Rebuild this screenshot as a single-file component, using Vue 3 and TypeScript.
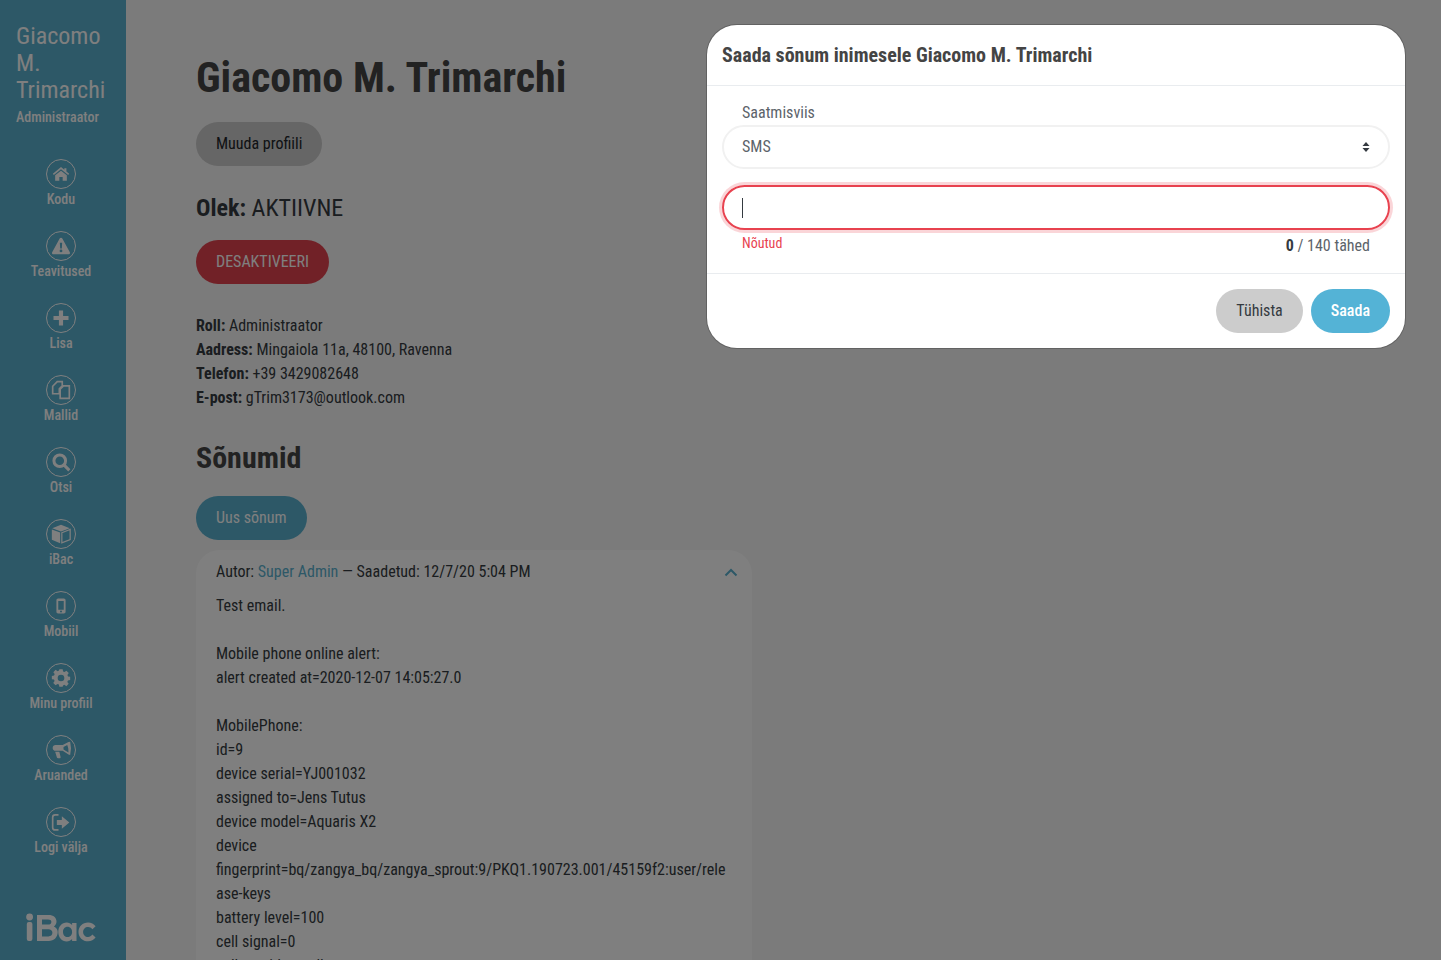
<template>
  <div class="page">
    <aside class="sidebar">
      <div class="user">
        <div class="user-name">Giacomo M. Trimarchi</div>
        <div class="user-role">Administraator</div>
      </div>
      <nav class="nav">
        <a v-for="item in navItems" :key="item.label" class="nav-item">
          <span class="nav-circle">
            <svg viewBox="0 0 24 24" class="nav-icon" v-html="item.icon"></svg>
          </span>
          <span class="nav-label">{{ item.label }}</span>
        </a>
      </nav>
      <div class="logo">
        <svg viewBox="0 0 70 30" width="70" height="30">
          <circle cx="3.600" cy="4" r="3.400" fill="#fff" />
          <rect x="0.800" y="9" width="5.600" height="19" rx="2" fill="#fff" />
          <path d="M11 2h11.500c5 0 8 2.600 8 6.600 0 2.200-1 3.800-2.600 4.800 2.400 1 3.800 3 3.800 5.600 0 5-3.600 9-9 9H11zM16 6.600v5h6c2 0 3.400-1 3.400-2.600s-1.400-2.400-3.400-2.400zM16 16.200v7.200h6.400c2.400 0 4-1.400 4-3.600s-1.600-3.600-4-3.600z" fill="#fff" fill-rule="evenodd" />
          <path d="M50.500 10v18h-4.400v-2c-1.400 1.500-3.200 2.400-5.400 2.400-4.800 0-8.400-4-8.400-9.500s3.600-9.400 8.400-9.400c2.200 0 4 .9 5.400 2.400v-2zM41.500 13.800c-2.600 0-4.500 2.200-4.500 5.100s1.900 5.100 4.500 5.100 4.600-2.200 4.600-5.100-2-5.100-4.600-5.100z" fill="#fff" fill-rule="evenodd" />
          <path d="M69.600 13.200l-3.200 3c-1.200-1.500-2.600-2.300-4.300-2.300-2.900 0-5 2.100-5 5s2.100 5 5 5c1.700 0 3.100-.8 4.300-2.300l3.200 3c-1.800 2.300-4.400 3.700-7.500 3.700-5.500 0-9.600-4.100-9.600-9.400s4.100-9.400 9.600-9.400c3.100 0 5.700 1.400 7.500 3.700z" fill="#fff" />
        </svg>
      </div>
    </aside>

    <main class="content">
      <h1 class="title">Giacomo M. Trimarchi</h1>
      <button class="btn btn-light">Muuda profiili</button>
      <p class="status"><b>Olek:</b> AKTIIVNE</p>
      <button class="btn btn-danger">DESAKTIVEERI</button>
      <div class="details">
        <div><b>Roll:</b> Administraator</div>
        <div><b>Aadress:</b> Mingaiola 11a, 48100, Ravenna</div>
        <div><b>Telefon:</b> +39 3429082648</div>
        <div><b>E-post:</b> gTrim3173@outlook.com</div>
      </div>
      <h2 class="subtitle">Sõnumid</h2>
      <button class="btn btn-primary">Uus sõnum</button>
      <section class="message">
        <div class="message-head">
          <span>Autor: <a class="link">Super Admin</a> — Saadetud: 12/7/20 5:04 PM</span>
          <svg class="chevron" viewBox="0 0 14 9" width="14" height="9">
            <path d="M1.500 7.500L7 2l5.500 5.500" fill="none" stroke="#5ab0ce" stroke-width="2" />
          </svg>
        </div>
        <div class="message-body">{{ messageBody }}</div>
      </section>
    </main>

    <div class="backdrop"></div>

    <div class="modal">
      <header class="modal-head">Saada sõnum inimesele Giacomo M. Trimarchi</header>
      <div class="modal-body">
        <label class="field-label">Saatmisviis</label>
        <div class="select">
          <span>SMS</span>
          <svg viewBox="0 0 8 12" width="8" height="12">
            <path d="M4 1l3.500 4h-7zM4 11L.5 7h7z" fill="#343a40" />
          </svg>
        </div>
        <div class="input-invalid"><span class="caret"></span></div>
        <div class="field-foot">
          <span class="error">Nõutud</span>
          <span class="counter"><b>0</b> / 140 tähed</span>
        </div>
      </div>
      <footer class="modal-foot">
        <button class="btn btn-cancel">Tühista</button>
        <button class="btn btn-send">Saada</button>
      </footer>
    </div>
  </div>
</template>

<script setup lang="ts">
interface NavItem {
  label: string
  icon: string
}

const navItems: NavItem[] = [
  { label: 'Kodu', icon: '<path fill="currentColor" d="M12 3.500l4 3.300V5h2.500v3.900l3.300 2.800-1.200 1.400L12 6.300 3.400 13.100l-1.200-1.400zM12 8l7 5.600V20h-5v-4.500h-4V20H5v-6.400z"/>' },
  { label: 'Teavitused', icon: '<path fill="currentColor" fill-rule="evenodd" d="M12 2c.7 0 1.200.4 1.600 1l9 16.500c.6 1.100-.2 2.500-1.600 2.500H3c-1.400 0-2.200-1.400-1.600-2.500l9-16.500c.4-.6.900-1 1.600-1zM10.600 8l.4 7h2l.4-7zM12 16.200a1.700 1.700 0 1 0 0 3.400 1.700 1.700 0 0 0 0-3.400z"/>' },
  { label: 'Lisa', icon: '<path fill="currentColor" d="M9.500 3h5v6.500H21v5h-6.500V21h-5v-6.500H3v-5h6.500z"/>' },
  { label: 'Mallid', icon: '<path fill="none" stroke="currentColor" stroke-width="2" d="M7.500 2h6v5L10 10.500V16.500H2V7.500zM15 7h7v15H11V11z"/>' },
  { label: 'Otsi', icon: '<path fill="none" stroke="currentColor" stroke-width="3.600" d="M10.500 3.500a7 7 0 1 1 0 14 7 7 0 0 1 0-14zM15.500 15.500l6.500 6.500"/>' },
  { label: 'iBac', icon: '<path fill="currentColor" d="M12 1l10.500 4L12 9 1.500 5zM1 6.500l10 3.800V23L1 19z"/><path fill="none" stroke="currentColor" stroke-width="1.500" d="M13 10.500l10-4v12.300L13 22.500z"/>' },
  { label: 'Mobiil', icon: '<path fill="currentColor" fill-rule="evenodd" d="M8.500 3h7c1.100 0 2 .9 2 2v14c0 1.100-.9 2-2 2h-7c-1.100 0-2-.9-2-2V5c0-1.100.9-2 2-2zM8.700 6v10.500h6.600V6zM12 17.500a1.200 1.200 0 1 0 0 2.400 1.200 1.200 0 0 0 0-2.400z"/>' },
  { label: 'Minu profiil', icon: '<path fill="currentColor" fill-rule="evenodd" d="M10 2h4l.5 2.700 1.700.7 2.300-1.600 2.800 2.800-1.600 2.300.7 1.700L23 11v4l-2.700.5-.7 1.700 1.600 2.300-2.800 2.800-2.300-1.600-1.700.7L14 23h-4l-.5-2.700-1.700-.7-2.300 1.600-2.800-2.800 1.600-2.300-.7-1.700L1 14v-4l2.700-.5.7-1.700-1.600-2.300 2.800-2.800 2.300 1.600 1.700-.7zM12 8.500a4 4 0 1 0 0 8 4 4 0 0 0 0-8z" transform="translate(0 -.5)"/>' },
  { label: 'Aruanded', icon: '<path fill="currentColor" fill-rule="evenodd" d="M21 2.500L23 2l1 8-1 8-2-.5-7-4.500H5.500C3.500 13 2 11.500 2 9.500S3.500 6 5.500 6H14zM19.500 6L15 8.500v3l6 3.500-.3-5zM5 14h5l1.500 6.500c.2.900-.4 1.500-1.200 1.500H8.500c-.7 0-1.200-.4-1.400-1z"/>' },
  { label: 'Logi välja', icon: '<path fill="currentColor" d="M13 5l9 7.500-9 7.500v-4.500H7v-6h6z"/><path fill="none" stroke="currentColor" stroke-width="2" d="M9 3.500H5C3.300 3.500 2 4.800 2 6.500v12c0 1.700 1.300 3 3 3h4"/>' },
]

const messageBody = `Test email.

Mobile phone online alert:
alert created at=2020-12-07 14:05:27.0

MobilePhone:
id=9
device serial=YJ001032
assigned to=Jens Tutus
device model=Aquaris X2
device fingerprint=bq/zangya_bq/zangya_sprout:9/PKQ1.190723.001/45159f2:user/release-keys
battery level=100
cell signal=0
cell provider=null
wifi signal=100`
</script>

<style>
html,
body {
  margin: 0;
  overflow: hidden;
}
</style>

<style scoped>
.page {
  display: flex;
  width: 1441px;
  height: 960px;
  overflow: hidden;
  position: relative;
  background: #f7f7f7;
  color: #343a40;
  font-family: "Roboto", "Liberation Sans", sans-serif;
  font-stretch: condensed;
  font-size: 16px;
  line-height: 24px;
}

.sidebar {
  width: 126px;
  flex: none;
  height: 960px;
  display: flex;
  flex-direction: column;
  background: #5ab0ce;
  color: #fff;
  box-sizing: border-box;
}

.user {
  padding: 23px 16px 0;
}

.user-name {
  font-size: 24px;
  line-height: 27px;
}

.user-role {
  font-size: 14px;
  line-height: 20px;
  margin-top: 3px;
  font-weight: 500;
}

.nav {
  display: flex;
  flex-direction: column;
  align-items: center;
  margin-top: 32px;
  padding-right: 4px;
  gap: 22px;
}

.nav-item {
  display: flex;
  flex-direction: column;
  align-items: center;
  height: 50px;
}

.nav-circle {
  width: 28px;
  height: 28px;
  flex: none;
  border: 1px solid #fff;
  border-radius: 50%;
  display: flex;
  align-items: center;
  justify-content: center;
}

.nav-icon {
  width: 20px;
  height: 20px;
}

.nav-label {
  font-size: 14px;
  line-height: 20px;
  font-weight: 500;
  white-space: nowrap;
}

.logo {
  margin-top: auto;
  padding: 0 0 17px 26px;
  line-height: 0;
}

.content {
  flex: 1;
  padding: 53px 0 0 70px;
  min-width: 0;
}

.title {
  margin: 0 0 19px;
  font-size: 42px;
  line-height: 50px;
  font-weight: 700;
  color: #444;
}

.btn {
  display: block;
  border: 0;
  border-radius: 22px;
  height: 44px;
  padding: 0 20px;
  font: inherit;
  font-stretch: inherit;
  color: #212529;
}

.btn-light {
  background: #ccc;
}

.status {
  margin: 26px 0 16px;
  font-size: 24px;
  line-height: 32px;
}

.btn-danger {
  background: #e2434f;
  color: #fff;
}

.details {
  margin-top: 30px;
}

.subtitle {
  margin: 29px 0 0;
  font-size: 30px;
  line-height: 38px;
  font-weight: 700;
  color: #444;
}

.subtitle + .btn {
  margin-top: 19px;
}

.btn-primary {
  background: #5ab0ce;
  color: #fff;
}

.message {
  width: 556px;
  margin-top: 10px;
  box-sizing: border-box;
  padding: 10px 20px;
  background: #fff;
  border-radius: 24px;
}

.message-head {
  display: flex;
  justify-content: space-between;
  align-items: center;
}

.chevron {
  margin-right: -6px;
}

.link {
  color: #5ab0ce;
}

.message-body {
  margin-top: 10px;
  white-space: pre-wrap;
  overflow-wrap: break-word;
}

.backdrop {
  position: absolute;
  inset: 0;
  background: rgba(0, 0, 0, 0.5);
}

.modal {
  position: absolute;
  left: 707px;
  top: 25px;
  width: 698px;
  height: 323px;
  box-sizing: border-box;
  background: #fff;
  border-radius: 30px;
  display: flex;
  flex-direction: column;
  color: #343a40;
  box-shadow: 0 0 0 1px rgba(0, 0, 0, 0.2);
}

.modal-head {
  height: 61px;
  box-sizing: border-box;
  padding: 18px 15px 0;
  border-bottom: 1px solid #e9ecef;
  font-size: 20px;
  font-weight: 700;
  color: #444;
}

.modal-body {
  height: 188px;
  box-sizing: border-box;
  padding: 15px 15px 0;
  border-bottom: 1px solid #e9ecef;
}

.field-label {
  display: block;
  padding-left: 20px;
  color: #5c636a;
}

.select {
  height: 44px;
  box-sizing: border-box;
  border: 2px solid #f1f1f1;
  border-radius: 22px;
  padding: 0 18px;
  display: flex;
  align-items: center;
  justify-content: space-between;
  color: #5c636a;
}

.input-invalid {
  margin-top: 16px;
  height: 45px;
  box-sizing: border-box;
  border: 2px solid #e8424f;
  border-radius: 23px;
  padding-left: 18px;
  display: flex;
  align-items: center;
  box-shadow: 0 0 0 3px rgba(232, 66, 79, 0.22);
}

.caret {
  width: 1px;
  height: 20px;
  background: #343a40;
}

.field-foot {
  display: flex;
  justify-content: space-between;
  padding: 3px 20px 0;
}

.error {
  color: #e8424f;
  font-size: 14px;
  line-height: 20px;
}

.counter {
  color: #5c636a;
  margin-top: 1px;
}

.counter b {
  color: #343a40;
}

.modal-foot {
  flex: 1;
  display: flex;
  justify-content: flex-end;
  gap: 8px;
  padding: 15px;
}

.btn-cancel {
  background: #ccc;
  color: #343a40;
}

.btn-send {
  background: #54b3d6;
  color: #fff;
  font-weight: 500;
}
</style>
